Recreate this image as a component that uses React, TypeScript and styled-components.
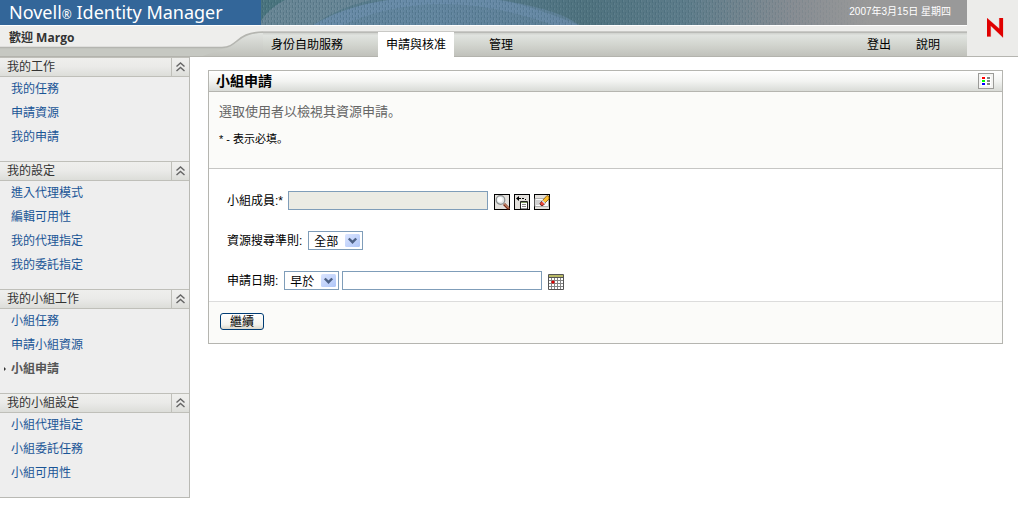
import React from 'react';
import styled, { createGlobalStyle } from 'styled-components';

const GlobalStyle = createGlobalStyle`
  *, *::before, *::after { box-sizing: border-box; }
  body {
    margin: 0;
    background: #fff;
    color: #000;
    font: 12px/16px "Liberation Sans", "Noto Sans CJK TC", sans-serif;
  }
  a { color: inherit; text-decoration: none; }
  ul, h1, h2, p { margin: 0; padding: 0; list-style: none; font-size: inherit; font-weight: inherit; }
  button, input, select { font: inherit; color: inherit; margin: 0; padding: 0; border-radius: 0; }
  svg { display: block; flex: none; }
`;

const Header = styled.header`
  display: flex;
`;

const HeaderMain = styled.div`
  flex: 1;
  min-width: 0;
`;

const LogoBox = styled.div`
  width: 51px;
  padding: 18px 0 0 20px;
  background: #ececea;
  border-bottom: 1px solid #b5b5b0;
`;

const Banner = styled.div`
  display: flex;
  height: 25px;
  background: #999;
  overflow: hidden;
`;

const ProductName = styled.h1`
  flex: none;
  width: 261px;
  padding-left: 9px;
  background: #336699;
  color: #fff;
  font: 18px/25px "Noto Sans", sans-serif;
  white-space: nowrap;

  small { font-size: 12px; }
`;

const BannerArt = styled.div`
  display: grid;
  flex: 1;
  min-width: 0;
  overflow: hidden;

  > * { grid-area: 1 / 1; }
`;

const Today = styled.span`
  justify-self: end;
  padding-right: 16px;
  color: #fff;
  font-size: 10px;
  line-height: 24px;
`;

const NavBar = styled.div`
  display: flex;
  height: 32px;
  background: linear-gradient(
    #fff 0 1px, #ededeb 1px 6px, #c9c9c6 6px 7px, #b9bab6 7px 8px,
    #d3d5d1 8px 9px, #e1e4e0 10px, #d5d8d2 18px, #c0c1bb 31px, #b3b3ad 31px 32px
  );
`;

const Welcome = styled.div`
  display: grid;
  width: 263px;

  > * { grid-area: 1 / 1; }
`;

const WelcomeText = styled.span`
  padding-left: 9px;
  color: #333;
  font: bold 12px/26px "Open Sans", "Noto Sans CJK TC", sans-serif;
`;

const Tabs = styled.nav`
  display: flex;
  flex: 1;
  gap: 27px;
  padding-top: 7px;
`;

const Tab = styled.a<{ $active?: boolean }>`
  padding: 1px 8px 0;
  line-height: 24px;
  background: ${p => (p.$active ? '#fff' : 'transparent')};
`;

const Tools = styled.nav`
  display: flex;
  gap: 25px;
  padding: 8px 27px 0 0;
  line-height: 24px;
`;

const Body = styled.div`
  display: flex;
  align-items: flex-start;
`;

const Sidebar = styled.nav`
  flex: none;
  width: 190px;
  background: #eee;
  border: solid #b9b9b4;
  border-width: 0 1px 1px 0;
`;

const Group = styled.section`
  padding-bottom: 12px;
`;

const GroupHead = styled.div`
  display: flex;
  height: 20px;
  border: solid #bfbfb9;
  border-width: 1px 0;
  background: linear-gradient(#efefed, #eaeae8 50%, #dcddd9);
`;

const GroupTitle = styled.h2`
  flex: 1;
  padding-left: 7px;
  color: #333;
  line-height: 18px;
`;

const Collapse = styled.button`
  display: flex;
  align-items: center;
  justify-content: center;
  width: 18px;
  border: 0;
  border-left: 1px solid #bfbfb9;
  background: none;
`;

const MenuItem = styled.li<{ $current?: boolean }>`
  display: flex;
  align-items: center;
  gap: 5px;
  height: 24px;
  padding-left: ${p => (p.$current ? 4 : 11)}px;
  color: ${p => (p.$current ? '#555' : '#1a5596')};
  font-weight: ${p => (p.$current ? 'bold' : 'normal')};
`;

const Main = styled.main`
  flex: 1;
  min-width: 0;
  padding: 13px 15px 0 18px;
`;

const Panel = styled.section`
  border: 1px solid #b5b5b0;
`;

const PanelHead = styled.div`
  display: flex;
  align-items: center;
  justify-content: space-between;
  height: 21px;
  padding: 0 8px 0 7px;
  border-bottom: 1px solid #b5b5b0;
  background: linear-gradient(#fff, #f3f4f2 50%, #d9dbd7);
`;

const PanelTitle = styled.h2`
  font-size: 14px;
  font-weight: bold;
`;

const LegendButton = styled.button`
  width: 16px;
  height: 16px;
  border: 1px solid #9b9b98;
  background: #f4f4f2;
`;

const Intro = styled.div`
  height: 77px;
  padding: 10px 10px 0;
  border-bottom: 1px solid #c6c6c4;
  background: #fbfbf9;
  font-family: "Liberation Sans", "Noto Sans CJK JP", sans-serif;
`;

const Lead = styled.p`
  color: #666;
  font-size: 13px;
  line-height: 20px;
`;

const Required = styled.p`
  padding-top: 8px;
  font-size: 11px;
  line-height: 18px;
`;

const Fields = styled.div`
  display: grid;
  gap: 21px;
  padding: 22px 18px 11px;
`;

const Field = styled.div`
  display: flex;
  align-items: center;
  height: 19px;
`;

const Label = styled.label`
  padding-right: 5px;
  line-height: 18px;
`;

const TextBox = styled.input`
  width: 200px;
  height: 19px;
  padding: 0 3px;
  border: 1px solid #7f9db9;
  background: #fff;

  &:disabled { background: #ebebe4; }
`;

const SelectBox = styled.span`
  display: grid;
  align-items: center;
  width: 55px;
  height: 19px;
  margin: 0 3px 0 1px;

  > * { grid-area: 1 / 1; }
  > svg { justify-self: end; margin-right: 3px; pointer-events: none; }
`;

const Select = styled.select`
  appearance: none;
  width: 100%;
  height: 19px;
  padding: 2px 0 0 5px;
  border: 1px solid #7f9db9;
  background: #fff;
`;

const IconRow = styled.span`
  display: flex;
  align-self: flex-end;
  gap: 4px;
  padding-left: 6px;
`;

const IconButton = styled.button`
  width: 16px;
  height: 16px;
  border: 0;
  background: none;
`;

const Footer = styled.div`
  height: 42px;
  padding: 11px;
  border-top: 1px solid #dcdcdc;
  background: #fbfbf9;
`;

const Submit = styled.button`
  display: block;
  width: 44px;
  height: 17px;
  padding-top: 1px;
  border: 1px solid #003c74;
  border-radius: 3px;
  background: linear-gradient(#fff, #f3f3ee 70%, #dcd8cc);
  line-height: 14px;
`;

const BannerDrawing = () => (
  <svg width="706" height="25" aria-hidden="true">
    <defs>
      <linearGradient id="sea" x1="0" x2="1" y1="0" y2="0">
        <stop offset="0" stopColor="#587b88" />
        <stop offset="0.25" stopColor="#597d90" />
        <stop offset="0.46" stopColor="#4f727e" />
        <stop offset="0.6" stopColor="#5d7c8a" />
        <stop offset="0.75" stopColor="#868c92" />
        <stop offset="0.86" stopColor="#999" />
        <stop offset="1" stopColor="#999" />
      </linearGradient>
      <linearGradient id="fade" x1="0" x2="1" y1="0" y2="0">
        <stop offset="0" stopColor="#fff" />
        <stop offset="0.65" stopColor="#fff" stopOpacity="0.7" />
        <stop offset="0.87" stopColor="#fff" stopOpacity="0" />
      </linearGradient>
      <pattern id="weave" width="6" height="5" patternUnits="userSpaceOnUse">
        <path d="M1.500 0v3M4.500 2v3" stroke="#274f60" strokeOpacity="0.28" />
        <path d="M2.500 0v2M5.500 3v2" stroke="#a9c8d4" strokeOpacity="0.15" />
      </pattern>
      <mask id="weaveMask"><rect width="706" height="25" fill="url(#fade)" /></mask>
    </defs>
    <rect width="706" height="25" fill="url(#sea)" />
    <path d="M0 0H24Q8 8 0 21Z" fill="#47737c" opacity="0.8" />
    <path d="M24 0H110Q76 8 52 25H0V21Q8 8 24 0Z" fill="#7890a0" opacity="0.5" />
    <path d="M52 25Q84 6 128 0H240Q300 10 318 25Z" fill="#7092b4" opacity="0.4" />
    <path d="M128 0H236Q262 3 318 25H292Q230 3 178 4T82 25H52Q84 6 128 0Z" fill="#7092b4" opacity="0.45" />
    <rect width="706" height="25" fill="url(#weave)" mask="url(#weaveMask)" />
  </svg>
);

const WelcomeShape = () => (
  <svg width="263" height="32" aria-hidden="true">
    <path d="M0 23H222C238 23 236 7 263 7V32H0Z" fill="#c6c8c2" />
    <path d="M222 24C238 22 238 8 263 8V32H200Z" fill="url(#tabFill)" />
    <defs>
      <linearGradient id="tabFill" x1="0" x2="0" y1="8" y2="31" gradientUnits="userSpaceOnUse">
        <stop offset="0" stopColor="#e1e4e0" />
        <stop offset="1" stopColor="#c0c1bb" />
      </linearGradient>
    </defs>
    <path d="M0 1H263V7C236 7 238 22.500 222 22.500H0Z" fill="#eeeeec" />
    <path d="M0 22.500H222C238 22.500 236 7 263 7" fill="none" stroke="#b4b5b0" strokeWidth="1.500" />
    <path d="M0 31.500H263" stroke="#b3b3ad" />
  </svg>
);

const NovellLogo = () => (
  <svg width="18" height="20" role="img" aria-label="Novell">
    <path d="M0 0L12.300 10.800V0H16V19.500L3.700 7.700V18.500H0Z" fill="#e00000" stroke="#e00000" strokeOpacity="0.35" strokeWidth="0.600" />
  </svg>
);

const DoubleChevron = () => (
  <svg width="9" height="10" fill="none" stroke="#666" strokeWidth="1.400" aria-hidden="true">
    <path d="M0.500 4.500L4.500 1L8.500 4.500M0.500 9L4.500 5.500L8.500 9" />
  </svg>
);

const DropArrow = () => (
  <svg width="15" height="13" aria-hidden="true">
    <defs>
      <linearGradient id="arrowFill" x1="0" x2="1" y1="0" y2="1">
        <stop offset="0" stopColor="#dbe5ff" />
        <stop offset="1" stopColor="#aec5f7" />
      </linearGradient>
    </defs>
    <rect width="15" height="13" rx="1.500" fill="url(#arrowFill)" />
    <path d="M3.800 4.500L7.500 8.200L11.200 4.500" fill="none" stroke="#4d6185" strokeWidth="2.400" />
  </svg>
);

const LegendIcon = () => (
  <svg width="14" height="14" aria-hidden="true">
    <path fill="#fff" d="M2 2h10v10H2z" />
    <path fill="#f00" d="M3 3h3v2H3z" />
    <path fill="#0f0" d="M3 6h3v2H3z" />
    <path fill="#00f" d="M3 9h3v2H3z" />
    <path fill="#808080" d="M8 3h3v2H8zM8 6h3v2H8zM8 9h3v2H8z" />
  </svg>
);

const IconFrame = () => <rect x="0.500" y="0.500" width="15" height="15" fill="#e3e0dc" stroke="#000" />;

const SearchIcon = () => (
  <svg width="16" height="16" aria-hidden="true">
    <IconFrame />
    <path d="M10 10L15 15" stroke="#7a2a18" strokeWidth="2.800" />
    <path d="M10 9.500L15 14.500" stroke="#efc49a" strokeWidth="1" />
    <circle cx="6.500" cy="6" r="4.300" fill="#e4e8e8" stroke="#8b8f90" strokeWidth="1.200" />
    <circle cx="6" cy="5.500" r="2.500" fill="#fff" />
  </svg>
);

const HistoryIcon = () => (
  <svg width="16" height="16" aria-hidden="true">
    <IconFrame />
    <path d="M2 4.500L5 2V7Z" fill="#000" />
    <path d="M5 4.500H7M8 4.500H10M11 5.500H12" stroke="#000" />
    <path d="M6.500 7.500H13.500V15H6.500Z" fill="#fff" stroke="#222" />
    <path d="M7 8.500H13" stroke="#79935c" />
    <path d="M8 10.500H12M8 12.500H12" stroke="#888" />
  </svg>
);

const ClearIcon = () => (
  <svg width="16" height="16" aria-hidden="true">
    <IconFrame />
    <path d="M1 4.500H14.500V12.500H1Z" fill="#fafafa" stroke="#b0b0b0" />
    <path d="M2 6H8V11H2Z" fill="#d2d2d2" />
    <path d="M8.500 6.500L13 1.500L15 2.500V5L10.500 9.500Z" fill="#ffc02e" stroke="#80500a" strokeWidth="0.800" />
    <path d="M6 9.500L8 7L11 9.500L9 11.500H7Z" fill="#ef4638" stroke="#5b1510" strokeWidth="0.800" />
    <path d="M8.200 6.800L11 9.500" stroke="#dfe6f2" strokeWidth="1.400" />
  </svg>
);

const CalendarIcon = () => (
  <svg width="16" height="16" aria-hidden="true">
    <path fill="#fff" d="M0 0H16V16H0Z" />
    <path d="M1 1H15V3H1Z" fill="#b9b966" />
    <path d="M3.500 4V15M6.500 4V15M9.500 4V15M12.500 4V15M1 6.500H15M1 9.500H15M1 12.500H15" stroke="#858585" />
    <path d="M1 3.500H15M0.500 0.500H15.500V15.500H0.500Z" fill="none" stroke="#555" />
    <circle cx="5" cy="8" r="1.600" fill="#e00000" />
  </svg>
);

const CurrentMark = () => (
  <svg width="2" height="4" aria-hidden="true"><path d="M0 0L2 2L0 4Z" fill="#333" /></svg>
);

const groups = [
  { title: '我的工作', items: ['我的任務', '申請資源', '我的申請'] },
  { title: '我的設定', items: ['進入代理模式', '編輯可用性', '我的代理指定', '我的委託指定'] },
  { title: '我的小組工作', items: ['小組任務', '申請小組資源', '小組申請'] },
  { title: '我的小組設定', items: ['小組代理指定', '小組委託任務', '小組可用性'] },
];

const currentPage = '小組申請';

const tabs = ['身份自助服務', '申請與核准', '管理'];

export default function App() {
  return (
    <>
      <GlobalStyle />
      <Header>
        <HeaderMain>
          <Banner>
            <ProductName>Novell<small>®</small> Identity Manager</ProductName>
            <BannerArt>
              <BannerDrawing />
              <Today>2007年3月15日 星期四</Today>
            </BannerArt>
          </Banner>
          <NavBar>
            <Welcome>
              <WelcomeShape />
              <WelcomeText>歡迎 Margo</WelcomeText>
            </Welcome>
            <Tabs>
              {tabs.map(tab => (
                <Tab key={tab} href="#" $active={tab === '申請與核准'}>{tab}</Tab>
              ))}
            </Tabs>
            <Tools>
              <a href="#">登出</a>
              <a href="#">說明</a>
            </Tools>
          </NavBar>
        </HeaderMain>
        <LogoBox><NovellLogo /></LogoBox>
      </Header>
      <Body>
        <Sidebar>
          {groups.map(group => (
            <Group key={group.title}>
              <GroupHead>
                <GroupTitle>{group.title}</GroupTitle>
                <Collapse type="button" aria-label={group.title}><DoubleChevron /></Collapse>
              </GroupHead>
              <ul>
                {group.items.map(item => (
                  <MenuItem key={item} $current={item === currentPage}>
                    {item === currentPage && <CurrentMark />}
                    <a href="#">{item}</a>
                  </MenuItem>
                ))}
              </ul>
            </Group>
          ))}
        </Sidebar>
        <Main>
          <Panel>
            <PanelHead>
              <PanelTitle>小組申請</PanelTitle>
              <LegendButton type="button" aria-label="圖例"><LegendIcon /></LegendButton>
            </PanelHead>
            <Intro>
              <Lead>選取使用者以檢視其資源申請。</Lead>
              <Required>* - 表示必填。</Required>
            </Intro>
            <form onSubmit={e => e.preventDefault()}>
              <Fields>
                <Field>
                  <Label htmlFor="member">小組成員:*</Label>
                  <TextBox id="member" type="text" disabled />
                  <IconRow>
                    <IconButton type="button" aria-label="搜尋"><SearchIcon /></IconButton>
                    <IconButton type="button" aria-label="歷程"><HistoryIcon /></IconButton>
                    <IconButton type="button" aria-label="清除"><ClearIcon /></IconButton>
                  </IconRow>
                </Field>
                <Field>
                  <Label htmlFor="criteria">資源搜尋準則:</Label>
                  <SelectBox>
                    <Select id="criteria"><option>全部</option></Select>
                    <DropArrow />
                  </SelectBox>
                </Field>
                <Field>
                  <Label htmlFor="period">申請日期:</Label>
                  <SelectBox>
                    <Select id="period"><option>早於</option></Select>
                    <DropArrow />
                  </SelectBox>
                  <TextBox type="text" aria-label="申請日期" />
                  <IconRow>
                    <IconButton type="button" aria-label="日曆"><CalendarIcon /></IconButton>
                  </IconRow>
                </Field>
              </Fields>
              <Footer>
                <Submit type="submit">繼續</Submit>
              </Footer>
            </form>
          </Panel>
        </Main>
      </Body>
    </>
  );
}
